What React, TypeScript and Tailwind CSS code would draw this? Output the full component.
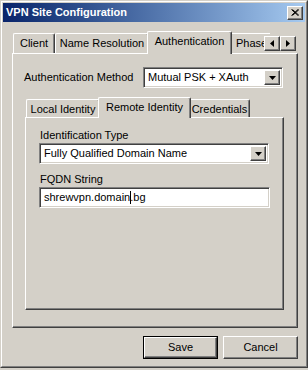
import React from 'react';

const raised =
  'border border-t-white border-l-white border-r-[#404040] border-b-[#404040] shadow-[inset_-1px_-1px_0_#808080]';
const sunken =
  'border border-t-[#808080] border-l-[#808080] border-r-white border-b-white shadow-[inset_1px_1px_0_#404040,inset_-1px_-1px_0_#d4d0c8]';
const panel =
  'border border-t-white border-l-white border-r-[#404040] border-b-[#404040] shadow-[inset_-1px_-1px_0_#808080]';

function DownArrow() {
  return (
    <svg width="7" height="4" viewBox="0 0 7 4">
      <polygon points="0,0 7,0 3.5,4" fill="#000" />
    </svg>
  );
}

function Combo({ value, width }: { value: string; width: string }) {
  return (
    <div className={`${sunken} ${width} h-[21px] bg-white flex items-center p-[2px]`}>
      <span className="flex-1 pl-[2px] leading-[13px] whitespace-nowrap">{value}</span>
      <div className={`${raised} bg-[#d4d0c8] w-[16px] h-full flex items-center justify-center`}>
        <DownArrow />
      </div>
    </div>
  );
}

interface TabProps {
  label: string;
  width: string;
  selected?: boolean;
  big?: boolean;
}

function Tab({ label, width, selected, big }: TabProps) {
  if (selected) {
    return (
      <div
        className={`relative z-10 -mx-[2px] -mb-px ${width} ${
          big ? 'h-[23px]' : 'h-[21px]'
        } bg-[#d4d0c8] border-t border-l border-t-white border-l-white border-r border-r-[#404040] shadow-[inset_-1px_0_0_#808080] rounded-t-[2px] flex justify-center pt-[3px] whitespace-nowrap`}
      >
        {label}
      </div>
    );
  }
  return (
    <div
      className={`${width} ${
        big ? 'h-[20px]' : 'h-[18px]'
      } bg-[#d4d0c8] border-t border-l border-t-white border-l-white border-r border-r-[#404040] shadow-[inset_-1px_0_0_#808080] rounded-t-[2px] flex justify-center pt-[3px] whitespace-nowrap overflow-hidden`}
    >
      {label}
    </div>
  );
}

function ScrollArrow({ dir }: { dir: 'left' | 'right' }) {
  return (
    <div className={`${raised} bg-[#d4d0c8] w-[16px] h-[15px] flex items-center justify-center`}>
      <svg width="4" height="7" viewBox="0 0 4 7">
        {dir === 'left' ? (
          <polygon points="4,0 4,7 0,3.5" fill="#000" />
        ) : (
          <polygon points="0,0 0,7 4,3.5" fill="#000" />
        )}
      </svg>
    </div>
  );
}

function Button({ label, isDefault }: { label: string; isDefault?: boolean }) {
  if (isDefault) {
    return (
      <div className="w-[75px] h-[23px] border border-black">
        <div className={`${raised} h-full bg-[#d4d0c8] flex items-center justify-center`}>{label}</div>
      </div>
    );
  }
  return (
    <div className={`${raised} w-[75px] h-[23px] bg-[#d4d0c8] flex items-center justify-center`}>
      {label}
    </div>
  );
}

export default function App() {
  return (
    <div className="w-[308px] h-[370px] bg-[#d4d0c8] font-['Liberation_Sans',Arial,sans-serif] text-[11px] leading-[13px] text-black">
      <div className="h-[368px] border border-t-[#d4d0c8] border-l-[#d4d0c8] border-r-[#404040] border-b-[#404040]">
        <div className="h-full border border-t-white border-l-white border-r-[#808080] border-b-[#808080] p-px flex flex-col">
          {/* Title bar */}
          <div className="h-[19px] bg-linear-to-r from-[#0a246a] to-[#a6caf0] flex items-center pl-[3px] pr-[2px]">
            <span className="flex-1 text-white font-bold">VPN Site Configuration</span>
            <div className={`${raised} bg-[#d4d0c8] w-[16px] h-[14px] flex items-center justify-center`}>
              <svg width="8" height="7" viewBox="0 0 8 7">
                <path d="M0.5 0.5 L7 6.5 M1.5 0.5 L8 6.5 M7 0.5 L0.5 6.5 M8 0.5 L1.5 6.5" stroke="#000" strokeWidth="1" />
              </svg>
            </div>
          </div>

          {/* Outer tab control */}
          <div className="pl-[9px] pt-[9px]">
            <div className="w-[286px]">
              <div className="relative h-[22px] flex items-end pl-px">
                <Tab label="Client" width="w-[42px]" big />
                <Tab label="Name Resolution" width="w-[94px]" big />
                <Tab label="Authentication" width="w-[85px]" selected big />
                <div className="w-[40px] h-[20px] bg-[#d4d0c8] border-t border-l border-t-white border-l-white rounded-tl-[2px] pt-[3px] pl-[5px] whitespace-nowrap overflow-hidden">
                  Phase 1
                </div>
                <div className="absolute right-[2px] top-[5px] flex">
                  <ScrollArrow dir="left" />
                  <ScrollArrow dir="right" />
                </div>
              </div>
              <div className={`${panel} h-[275px] bg-[#d4d0c8] pt-[13px]`}>
                <div className="flex items-center pl-[11px] pr-[14px]">
                  <span className="flex-1 whitespace-nowrap">Authentication Method</span>
                  <Combo value="Mutual PSK + XAuth" width="w-[140px]" />
                </div>

                {/* Inner tab control */}
                <div className="ml-[12px] mt-[9px] w-[259px]">
                  <div className="h-[20px] flex items-end pl-px">
                    <Tab label="Local Identity" width="w-[74px]" />
                    <Tab label="Remote Identity" width="w-[93px]" selected />
                    <Tab label="Credentials" width="w-[61px]" />
                  </div>
                  <div className={`${panel} h-[193px] bg-[#d4d0c8] pl-[13px] pt-[11px]`}>
                    <div className="pl-px">Identification Type</div>
                    <div className="mt-[1px]">
                      <Combo value="Fully Qualified Domain Name" width="w-[230px]" />
                    </div>
                    <div className="pl-px mt-[9px]">FQDN String</div>
                    <div className={`${sunken} mt-[1px] w-[231px] h-[21px] bg-white flex items-center pl-[4px]`}>
                      <span className="whitespace-nowrap">shrewvpn.domain</span>
                      <span className="inline-block w-px h-[13px] bg-black -mr-px" />
                      <span className="whitespace-nowrap">.bg</span>
                    </div>
                  </div>
                </div>
              </div>
            </div>
          </div>

          {/* Buttons */}
          <div className="mt-[8px] flex justify-end gap-[5px] pr-[7px]">
            <Button label="Save" isDefault />
            <Button label="Cancel" />
          </div>
        </div>
      </div>
    </div>
  );
}
